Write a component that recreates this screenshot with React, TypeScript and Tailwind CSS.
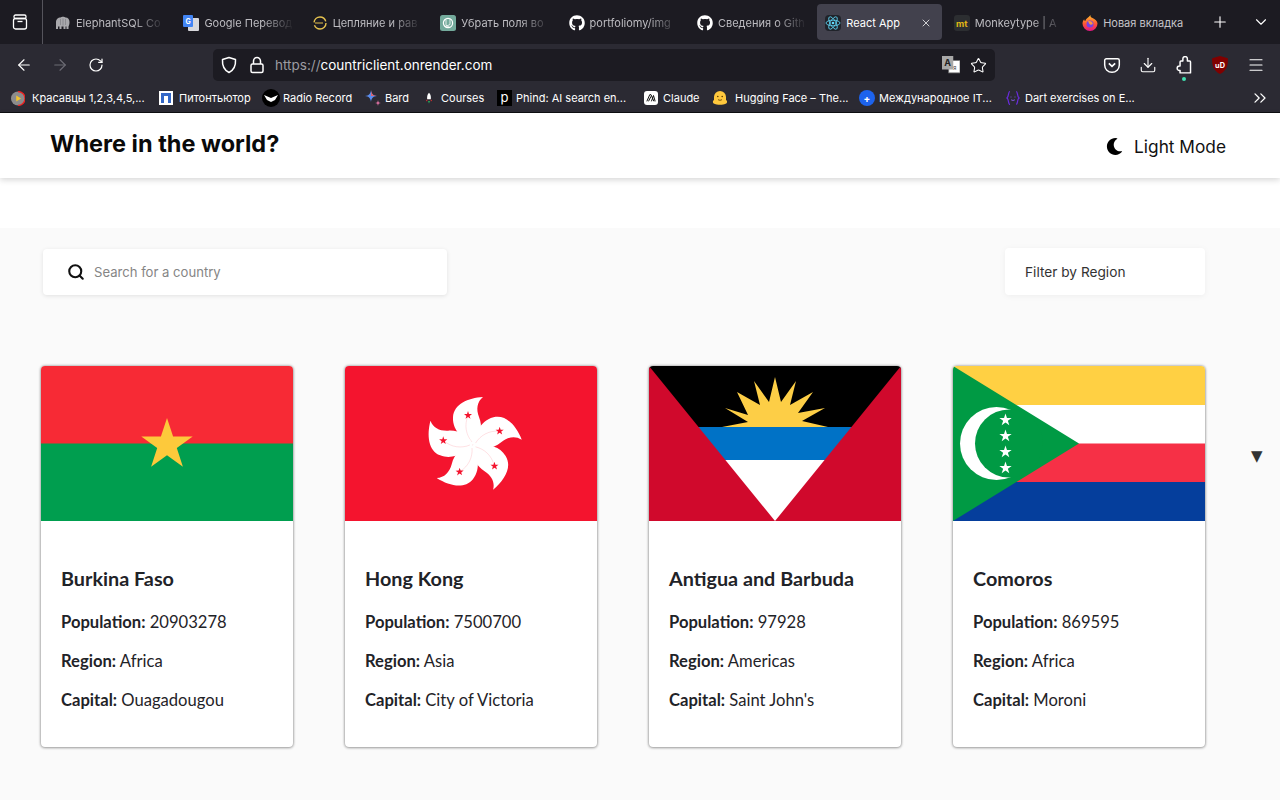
import React from "react";
import { ArrowLeft, ArrowRight, RotateCw, Star, Download, Menu, Plus, ChevronDown, ChevronsRight, X, Search } from "lucide-react";
import { FaMoon, FaGithub } from "react-icons/fa";

const Fav = {
  elephant: <svg viewBox="0 0 16 16" className="w-4 h-4"><path d="M1 14V7.500C1 4 3 2.500 5.500 2.500c1-1 4-1 5 0 2.500 0 4 2 4 4.500 0 2-.5 3.500-1 4.500V14h-2v-2.500h-1V14h-2v-2.500h-2V14H4.500v-2.500H3V14z" fill="#a9a9ad" /><path d="M5.500 4v6M8 3.500v7M10.500 4v6" stroke="#77777c" strokeWidth=".6" /></svg>,
  gt: <svg viewBox="0 0 16 16" className="w-4 h-4"><rect x="5" y="3" width="11" height="13" rx="1" fill="#d8d8dc" /><rect x="0" y="0" width="10" height="12" rx="1" fill="#4285f4" /><text x="2.500" y="9" fontSize="7" fontWeight="700" fill="#fff" fontFamily="Inter, sans-serif">G</text></svg>,
  ring: <svg viewBox="0 0 16 16" className="w-4 h-4"><circle cx="8" cy="8" r="6" fill="none" stroke="#e6c34f" strokeWidth="1.400" strokeDasharray="16 3 16 3" /><path d="M3 8h8" stroke="#e6c34f" strokeWidth="1" /></svg>,
  gpt: <svg viewBox="0 0 16 16" className="w-4 h-4"><rect width="16" height="16" rx="2.500" fill="#74aa9c" /><circle cx="8" cy="8" r="4.600" fill="none" stroke="#fff" strokeWidth="1.200" /><path d="M6 4.500v6l4 2M10 3.500v6l-4.500 2" fill="none" stroke="#fff" strokeWidth=".8" /></svg>,
  gh: <FaGithub className="w-4 h-4 text-white" />,
  react: <span className="w-4 h-4 flex items-center justify-center rounded-sm bg-[#20232a]"><svg viewBox="0 0 16 16" className="w-4 h-4"><g fill="none" stroke="#61dafb" strokeWidth=".8"><ellipse cx="8" cy="8" rx="7" ry="2.800" /><ellipse cx="8" cy="8" rx="7" ry="2.800" transform="rotate(60 8 8)" /><ellipse cx="8" cy="8" rx="7" ry="2.800" transform="rotate(120 8 8)" /></g><circle cx="8" cy="8" r="1.300" fill="#61dafb" /></svg></span>,
  mt: <span className="w-4 h-4 flex items-center justify-center rounded-[3px] bg-[#2c2e31] text-[9px] font-bold text-[#e2b714] leading-none">mt</span>,
  ff: <svg viewBox="0 0 16 16" className="w-4 h-4"><defs><linearGradient id="ffg" x1="0" y1="0" x2="0" y2="1"><stop offset="0" stopColor="#ffbd2e" /><stop offset=".55" stopColor="#ff5634" /><stop offset="1" stopColor="#e31587" /></linearGradient></defs><path d="M8 16A7.500 7.500 0 0 1 .5 8.500C.7 6 1.500 5 2.200 4.200c0 1 .4 1.500 1 1.800C4 3.500 6.500 2.500 8.500 0c-.3 1.500.5 2.500 2 3 2.500 1 5 3 5 5.500A7.500 7.500 0 0 1 8 16z" fill="url(#ffg)" /><circle cx="8" cy="9" r="3.500" fill="#7542e5" /><path d="M6 6.500c2-1 4.500 0 4.800 2.500-1 1-3 1-3.300 0z" fill="#ff9640" /></svg>,
};

const tabs = [
  { icon: Fav.elephant, title: "ElephantSQL Co" },
  { icon: Fav.gt, title: "Google Перевод" },
  { icon: Fav.ring, title: "Цепляние и рав" },
  { icon: Fav.gpt, title: "Убрать поля во" },
  { icon: Fav.gh, title: "portfoliomy/img" },
  { icon: Fav.gh, title: "Сведения о Gith" },
  { icon: Fav.react, title: "React App", active: true },
  { icon: Fav.mt, title: "Monkeytype | A" },
  { icon: Fav.ff, title: "Новая вкладка", plain: true },
];

const bookmarks = [
  { w: 14, ml: 11, gap: 7, t: "Красавцы 1,2,3,4,5,...", tw: 113, icon: <svg viewBox="0 0 16 16" className="w-[15px] h-[15px]"><circle cx="8" cy="8" r="8" fill="#8c8c8c" /><path d="M8 0a8 8 0 0 1 0 16" fill="none" stroke="#e22" strokeWidth="1.500" /><path d="M6 4.500v7l5.500-3.500z" fill="#f3c32c" /></svg> },
  { w: 14, ml: 14, gap: 6, t: "Питонтьютор", tw: 73, icon: <span className="w-[14px] h-[14px] bg-white flex items-center justify-center"><span className="w-[10px] h-[10px] bg-[#3367c7] flex justify-center"><span className="w-[4px] h-[7px] mt-[3px] bg-white" /></span></span> },
  { w: 18, ml: 10, gap: 3, t: "Radio Record", tw: 70, icon: <svg viewBox="0 0 18 18" className="w-[18px] h-[18px]"><circle cx="9" cy="9" r="9" fill="#000" /><path d="M2 6l7 3 7-3-3 5-4 2-4-2z" fill="#fff" /></svg> },
  { w: 15, ml: 12, gap: 5, t: "Bard", tw: 24, icon: <svg viewBox="0 0 16 16" className="w-4 h-4 shrink-0"><path d="M6 0c.5 4 2 5.500 6 6-4 .5-5.500 2-6 6-.5-4-2-5.500-6-6 4-.5 5.500-2 6-6z" fill="#5b8def" /><path d="M6 0c.5 4 2 5.500 6 6H6z" fill="#d96570" /><path d="M13 10c.2 2 1 2.800 3 3-2 .2-2.800 1-3 3-.2-2-1-2.800-3-3 2-.2 2.800-1 3-3z" fill="#d96fa0" /></svg> },
  { w: 10, ml: 15, gap: 7, t: "Courses", tw: 44, icon: <svg viewBox="0 0 12 16" className="w-[10px] h-[15px]"><path d="M6 1c2 2 2.500 4 2.200 8H3.800C3.500 5 4 3 6 1z" fill="#fff" /><path d="M3.800 9l-1.500 2 1.700.3zM8.200 9l1.500 2-1.700.3z" fill="#e33" /><path d="M5 11h2l-1 3z" fill="#2c6" /></svg> },
  { w: 15, ml: 12, gap: 4, t: "Phind: AI search en...", tw: 110, icon: <span className="w-[15px] h-[16px] bg-black text-white text-[13px] leading-[15px] text-center">p</span> },
  { w: 14, ml: 18, gap: 5, t: "Claude", tw: 36, icon: <span className="w-[14px] h-[14px] rounded-[3px] bg-white flex items-center justify-center"><svg viewBox="0 0 12 12" className="w-[10px] h-[10px]"><path d="M1 10L4.500 2h1.500L9.500 10M3 10l3-6M6.500 10l2.500-7 2 7" fill="none" stroke="#111" strokeWidth="1.200" /></svg></span> },
  { w: 16, ml: 13, gap: 7, t: "Hugging Face – The...", tw: 109, icon: <svg viewBox="0 0 16 16" className="w-4 h-4"><path d="M8 1a6 6 0 0 1 6 6v3c2 1 1 4-1 4-1 1-9 1-10 0-2 0-3-3-1-4V7a6 6 0 0 1 6-6z" fill="#ffc83d" /><circle cx="5.800" cy="6.500" r=".8" fill="#5a3a00" /><circle cx="10.200" cy="6.500" r=".8" fill="#5a3a00" /><path d="M6 9.500c1 1 3 1 4 0" fill="none" stroke="#5a3a00" strokeWidth=".8" /></svg> },
  { w: 16, ml: 15, gap: 4, t: "Международное IT...", tw: 111, icon: <span className="w-4 h-4 rounded-full bg-[#1d63ed] flex items-center justify-center text-white text-[10px] font-bold leading-none">+</span> },
  { w: 14, ml: 16, gap: 5, t: "Dart exercises on E...", tw: 110, icon: <svg viewBox="0 0 14 16" className="w-[14px] h-4"><path d="M4 1.500C2 1.500 3 7 1 8c2 1 1 6.500 3 6.500M10 1.500c2 0 1 5.500 3 6.500-2 1-1 6.500-3 6.500" fill="none" stroke="#6a2be0" strokeWidth="1.200" /><path d="M5 7h.01M9 7h.01M5.500 10c1 .6 2 .6 3 0" stroke="#8a5cf0" strokeWidth="1" fill="none" strokeLinecap="round" /></svg> },
];

function BurkinaFaso() {
  return (
    <svg viewBox="0 0 252 155" className="block w-full h-[155px]">
      <rect width="252" height="78" fill="#f72a35" />
      <rect y="77.500" width="252" height="78" fill="#009e4f" />
      <polygon fill="#fdc93b" points="126,52 132.100,70.600 151.700,70.600 135.800,82.100 141.900,100.800 126,89.200 110.100,100.800 116.200,82.100 100.300,70.600 119.900,70.600" />
    </svg>
  );
}

function HongKong() {
  return (
    <svg viewBox="0 0 252 155" className="block w-full h-[155px]">
      <rect width="252" height="155" fill="#f4142e" />
      <g transform="translate(128 79)">
        {[0, 72, 144, 216, 288].map((a) => (
          <g key={a} transform={`rotate(${a})`}>
            <path d="M0 0C-7 -4 -21 -13 -20 -28C-19 -41 -5 -47 10 -48C4 -43 3 -36 6 -28C10 -18 8 -7 0 0Z" fill="#fff" />
            <path d="M-1 -3C-7 -10 -9 -20 -5 -29" fill="none" stroke="#f4142e" strokeWidth=".4" opacity=".3" />
            <polygon fill="#f4142e" points="-5,-34 -4,-31 -1,-31 -3.400,-29.100 -2.500,-26.200 -5,-27.900 -7.500,-26.200 -6.600,-29.100 -9,-31 -6,-31" />
          </g>
        ))}
      </g>
    </svg>
  );
}

function Antigua() {
  return (
    <svg viewBox="0 0 252 155" className="block w-full h-[155px]">
      <rect width="252" height="155" fill="#000" />
      <polygon fill="#fdce46" points="73,61 99,56 76,42 99,49 88,26 111,39 105,15 120,36 126,11 132,36 147,15 141,39 164,26 149,47 176,42 153,55 179,61" />
      <rect y="61" width="252" height="33" fill="#0072c6" />
      <rect y="94" width="252" height="61" fill="#fff" />
      <polygon fill="#d0092c" points="0,0 126,155 0,155" />
      <polygon fill="#d0092c" points="252,0 126,155 252,155" />
    </svg>
  );
}

function Comoros() {
  const star = (cy: number) => (
    <polygon key={cy} fill="#fff" transform={`translate(52.500 ${cy}) scale(6.500)`} points="0,-1 .225,-.31 .951,-.31 .363,.118 .588,.809 0,.382 -.588,.809 -.363,.118 -.951,-.31 -.225,-.31" />
  );
  return (
    <svg viewBox="0 0 252 155" className="block w-full h-[155px]">
      <rect width="252" height="39" fill="#ffd043" />
      <rect y="39" width="252" height="38.500" fill="#fff" />
      <rect y="77.500" width="252" height="38.500" fill="#f63046" />
      <rect y="116" width="252" height="39" fill="#053e9c" />
      <polygon fill="#009a44" points="0,0 126,77.500 0,155" />
      <circle cx="43.500" cy="77.500" r="36.500" fill="#fff" />
      <circle cx="56" cy="77.500" r="34" fill="#009a44" />
      {[54, 70, 86, 102].map(star)}
    </svg>
  );
}

const countries = [
  { name: "Burkina Faso", pop: "20903278", region: "Africa", capital: "Ouagadougou", flag: <BurkinaFaso /> },
  { name: "Hong Kong", pop: "7500700", region: "Asia", capital: "City of Victoria", flag: <HongKong /> },
  { name: "Antigua and Barbuda", pop: "97928", region: "Americas", capital: "Saint John's", flag: <Antigua /> },
  { name: "Comoros", pop: "869595", region: "Africa", capital: "Moroni", flag: <Comoros /> },
];

function Card({ c }: { c: (typeof countries)[number] }) {
  return (
    <div className="w-[252px] h-[381px] bg-white rounded-[4px] overflow-hidden shadow-[0_0_3px_rgba(0,0,0,0.45),0_1px_3px_rgba(0,0,0,0.2)] font-['Lato',sans-serif] text-[#1f2328]">
      {c.flag}
      <div className="pl-5 pt-[46px]">
        <h2 className="text-[19.8px] font-bold leading-[22px]">{c.name}</h2>
        <p className="text-[16.6px] leading-[22px] mt-[22px]"><b className="font-bold">Population:</b> {c.pop}</p>
        <p className="text-[16.6px] leading-[22px] mt-[17px]"><b className="font-bold">Region:</b> {c.region}</p>
        <p className="text-[16.6px] leading-[22px] mt-[17px]"><b className="font-bold">Capital:</b> {c.capital}</p>
      </div>
    </div>
  );
}

export default function App() {
  return (
    <div className="w-[1280px] h-[800px] overflow-hidden bg-white font-['Inter',sans-serif]">
      {/* Tab strip */}
      <div className="h-[44px] bg-[#1c1b22] flex items-center">
        <div className="w-[43px] h-[44px] border-r border-[#55545c] flex items-center justify-center pr-[3px]">
          <svg viewBox="0 0 16 16" className="w-[16px] h-[16px]" fill="none" stroke="#fff" strokeWidth="1.300"><rect x="2" y="1" width="12" height="3.500" rx="1.500" /><rect x="1.500" y="4.500" width="13" height="10.500" rx="2" /><path d="M5.500 7.500h5" /></svg>
        </div>
        <div className="w-[2px]" />
        {tabs.map((t) => (
          <div key={t.title} className={`w-[128.4px] shrink-0 h-[36px] flex ${t.active ? "px-[2px]" : ""}`}>
            <div className={`flex items-center w-full rounded-[4px] pt-[2px] ${t.active ? "bg-[#42414d] pl-2 pr-[10px]" : "pl-[10px] pr-2"}`}>
              <span className="w-4 h-4 shrink-0 flex">{t.icon}</span>
              <span className={`ml-[5px] text-[11px] whitespace-nowrap flex-1 ${t.active ? "text-white" : t.plain ? "text-[#c4c3c8]" : "text-[#bdbcc1] [mask-image:linear-gradient(to_right,black_65%,transparent_100%)]"}`}>{t.title}</span>
              {t.active && <X className="w-[12px] h-[12px] text-white shrink-0" strokeWidth={1.500} />}
            </div>
          </div>
        ))}
        <div className="flex-1 flex items-center pl-[10px] gap-[23px] text-white">
          <Plus className="w-[18px] h-[18px]" strokeWidth={1.500} />
          <ChevronDown className="w-[18px] h-[18px]" strokeWidth={1.500} />
        </div>
      </div>

      {/* Toolbar */}
      <div className="h-[37px] bg-[#2b2a33] flex items-center text-white">
        <div className="w-[213px] flex items-center pl-[15px] gap-[18px] mt-[4px]">
          <ArrowLeft className="w-[18px] h-[18px]" strokeWidth={1.500} />
          <ArrowRight className="w-[18px] h-[18px] text-[#6d6c75]" strokeWidth={1.500} />
          <RotateCw className="w-[16px] h-[16px] ml-[1px]" strokeWidth={1.800} />
        </div>
        <div className="w-[782px] h-[32px] mt-[5px] bg-[#1c1b22] rounded-[5px] flex items-center pl-[7px] pr-[8px]">
          <svg viewBox="0 0 18 18" className="w-[18px] h-[18px]" fill="none" stroke="#fff" strokeWidth="1.500"><path d="M9 1.500l6.500 2c.4 6-1.500 10.500-6.500 13-5-2.500-6.900-7-6.500-13z" strokeLinejoin="round" /></svg>
          <svg viewBox="0 0 18 18" className="w-[18px] h-[18px] ml-[10px]" fill="none" stroke="#fff" strokeWidth="1.500"><rect x="3" y="8" width="12" height="8.500" rx="1.500" /><path d="M5.500 8V5a3.500 3.500 0 0 1 7 0v3" /></svg>
          <span className="ml-[9px] text-[13.5px]"><span className="text-[#9c9ba1]">https://</span>countriclient.onrender.com</span>
          <div className="flex-1" />
          <svg viewBox="0 0 16 16" className="w-[18px] h-[18px]"><rect x="6" y="4" width="10" height="11" fill="#fff" stroke="#777" strokeWidth=".7" /><rect x="0" y="0" width="10" height="12" fill="#a8a8a8" /><text x="2" y="9" fontSize="8" fontWeight="700" fill="#222" fontFamily="Inter, sans-serif">A</text><text x="10" y="12" fontSize="5" fill="#444" fontFamily="Inter, sans-serif">я</text></svg>
          <Star className="w-[17px] h-[17px] ml-[10px]" strokeWidth={1.500} />
        </div>
        <div className="flex-1 flex items-center pl-[108px] gap-[18px] mt-[5px]">
          <svg viewBox="0 0 16 16" className="w-[18px] h-[18px] shrink-0" fill="none" stroke="#fff" strokeWidth="1.300"><path d="M3 2.500h10a1.500 1.500 0 0 1 1.500 1.500v4a6.500 6.500 0 0 1-13 0V4A1.500 1.500 0 0 1 3 2.500z" /><path d="M5.200 6.500L8 9.200l2.800-2.700" strokeWidth="1.500" /></svg>
          <Download className="w-[18px] h-[18px] shrink-0" strokeWidth={1.500} />
          <div className="relative shrink-0 w-[18px] h-[18px]">
            <svg viewBox="0 0 16 16" className="w-[18px] h-[18px]" fill="none" stroke="#fff" strokeWidth="1.300" strokeLinejoin="round"><path d="M7 4.500V2.500a2 2 0 0 1 4 0v2h2a.8.8 0 0 1 .8.8v9.700H4.500v-2.200h-.6a2 2 0 0 1 0-4h.6V5.300a.8.8 0 0 1 .8-.8z" /></svg>
            <span className="absolute left-[7px] top-[21px] w-[4px] h-[4px] rounded-full bg-[#3fe1b0]" />
          </div>
          <svg viewBox="0 0 16 16" className="w-[18px] h-[18px] shrink-0"><path d="M8 0l7 2c.3 6-1 11-7 14C2 13 .7 8 1 2z" fill="#800000" /><text x="8" y="10.500" textAnchor="middle" fontSize="6.500" fontWeight="700" fill="#fff" fontFamily="Inter, sans-serif">uD</text></svg>
          <Menu className="w-[18px] h-[18px] shrink-0" strokeWidth={1.500} />
        </div>
      </div>

      {/* Bookmarks */}
      <div className="h-[32px] bg-[#2b2a33] border-b border-[#0e0e11] flex items-center pt-[3px] text-white relative">
        {bookmarks.map((b) => (
          <div key={b.t} className="flex items-center shrink-0" style={{ marginLeft: b.ml }}>
            <span className="flex items-center justify-center" style={{ width: b.w }}>{b.icon}</span>
            <span className="text-[11px] whitespace-nowrap" style={{ marginLeft: b.gap, width: b.tw }}>{b.t}</span>
          </div>
        ))}
        <ChevronsRight className="absolute right-[10px] top-[7px] w-[20px] h-[20px]" strokeWidth={1.500} />
      </div>

      {/* App header */}
      <header className="relative h-[65px] bg-white shadow-[0_2px_6px_rgba(0,0,0,0.16)] flex items-start justify-between pl-[50px] pr-[54px]">
        <h1 className="text-[23.5px] font-bold text-[#0a0a0a] leading-[29px] mt-[16px]">Where in the world?</h1>
        <div className="flex items-center mt-[21px] text-[#111]">
          <FaMoon className="w-[17px] h-[17px] text-black" />
          <span className="ml-[11px] text-[17.3px] leading-[24px] mt-[1px]">Light Mode</span>
        </div>
      </header>

      <div className="h-[50px] bg-white" />

      {/* Main */}
      <main className="h-[572px] bg-[#fafafa] pl-[41px] pt-[20px]">
        <div className="flex items-start justify-between w-[1164px]">
          <div className="ml-[2px] mt-[1px] w-[404px] h-[46px] bg-white rounded-[4px] shadow-[0_1px_4px_rgba(0,0,0,0.1)] flex items-center pl-[24px]">
            <Search className="w-[18px] h-[18px] text-[#111]" strokeWidth={2.800} />
            <input readOnly placeholder="Search for a country" className="ml-[9px] pt-[2px] flex-1 outline-none bg-transparent text-[13.1px] placeholder:text-[#858585]" />
          </div>
          <div className="w-[200px] h-[47px] pt-[2px] bg-white rounded-[4px] shadow-[0_1px_6px_rgba(0,0,0,0.05)] flex items-center pl-[20px] text-[13.7px] text-[#333]">Filter by Region</div>
        </div>
        <div className="flex items-start mt-[71px]">
          <div className="flex gap-[52px]">
            {countries.map((c) => <Card key={c.name} c={c} />)}
          </div>
          <span className="ml-[46px] mt-[83px] text-[15px] text-[#333] font-['DejaVu_Sans',sans-serif] leading-none">▼</span>
        </div>
      </main>
    </div>
  );
}
